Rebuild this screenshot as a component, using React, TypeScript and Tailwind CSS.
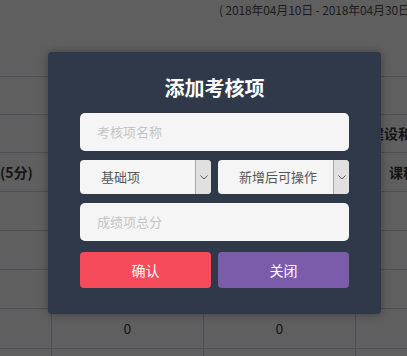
import React from "react";

const font = { fontFamily: '"Noto Sans CJK SC", "Noto Sans", sans-serif' };

function Row({ h, children }: { h: string; children?: React.ReactNode }) {
  return <div className={`flex border-t border-[#4b4e52] ${h}`}>{children}</div>;
}

export default function App() {
  return (
    <div className="relative h-[356px] w-[407px] overflow-hidden bg-[#5f5f5f]" style={font}>
      {/* background page */}
      <div className="flex h-[76px] items-start pl-[219px] pt-[1px]">
        <span className="whitespace-nowrap text-[12px] leading-[18px] tracking-[-0.15px] text-[#1c1c1c]">( 2018年04月10日 - 2018年04月30日 )</span>
      </div>
      <div className="flex flex-col">
        <Row h="h-[38px]" />
        <Row h="h-[38px]">
          <div className="flex-1" />
          <div className="flex w-[30px] items-center overflow-hidden whitespace-nowrap text-[14px] font-bold text-[#151515]">
            <span className="-ml-[7px]">建设和</span>
          </div>
        </Row>
        <Row h="h-[39px]">
          <div className="flex w-[51px] items-center overflow-hidden whitespace-nowrap text-[14px] font-bold text-[#151515]">
            <span>(5分)</span>
          </div>
          <div className="flex-1" />
          <div className="flex w-[18px] items-center overflow-hidden whitespace-nowrap text-[14px] font-bold text-[#151515]">
            <span>课程</span>
          </div>
        </Row>
        <Row h="h-[39px]" />
        <Row h="h-[39px]" />
        <Row h="h-[39px]" />
        <Row h="h-[40px]">
          <div className="w-[51px]" />
          <div className="flex w-[152px] items-center justify-center border-l border-[#4b4e52] text-[14px] text-[#151515]">0</div>
          <div className="flex w-[152px] items-center justify-center border-l border-[#4b4e52] text-[14px] text-[#151515]">0</div>
          <div className="flex-1 border-l border-[#4b4e52]" />
        </Row>
        <Row h="h-[10px]">
          <div className="w-[51px]" />
          <div className="w-[152px] border-l border-[#4b4e52]" />
          <div className="w-[152px] border-l border-[#4b4e52]" />
          <div className="flex-1 border-l border-[#4b4e52]" />
        </Row>
      </div>

      {/* modal */}
      <div className="absolute left-[48px] top-[52px] flex h-[262px] w-[333px] flex-col rounded-[4px] bg-[#2f3949] px-[32px] pt-[22px] shadow-[0_0_8px_rgba(0,0,0,0.35)]">
        <div className="mb-[11px] h-[28px] text-center text-[20px] font-bold leading-[28px] text-white">添加考核项</div>
        <div className="flex h-[38px] items-center rounded-[5px] bg-[#f5f5f5] pl-[17px] text-[13px] text-[#c4c4c4]">考核项名称</div>
        <div className="mt-[9px] flex h-[34px] gap-[7px]">
          <Select label="基础项" />
          <Select label="新增后可操作" />
        </div>
        <div className="mt-[9px] flex h-[38px] items-center rounded-[5px] bg-[#f5f5f5] pl-[17px] text-[13px] text-[#c4c4c4]">成绩项总分</div>
        <div className="mt-[11px] flex h-[36px] gap-[7px]">
          <div className="flex flex-1 items-center justify-center rounded-[4px] bg-[#f54b5a] text-[14px] text-white">确认</div>
          <div className="flex flex-1 items-center justify-center rounded-[4px] bg-[#7b5cab] text-[14px] text-white">关闭</div>
        </div>
      </div>
    </div>
  );
}

function Select({ label }: { label: string }) {
  return (
    <div className="flex flex-1 overflow-hidden rounded-[4px] bg-[#f5f5f5]">
      <div className="flex flex-1 items-center pl-[21px] text-[13px] text-[#555555]">{label}</div>
      <div className="flex w-[16px] items-center justify-center border-l border-[#a8a8a8] bg-[#e0e0e0]">
        <svg width="8" height="5" viewBox="0 0 8 5" fill="none">
          <path d="M0.5 0.5 L4 4 L7.5 0.5" stroke="#555" strokeWidth="1" />
        </svg>
      </div>
    </div>
  );
}
